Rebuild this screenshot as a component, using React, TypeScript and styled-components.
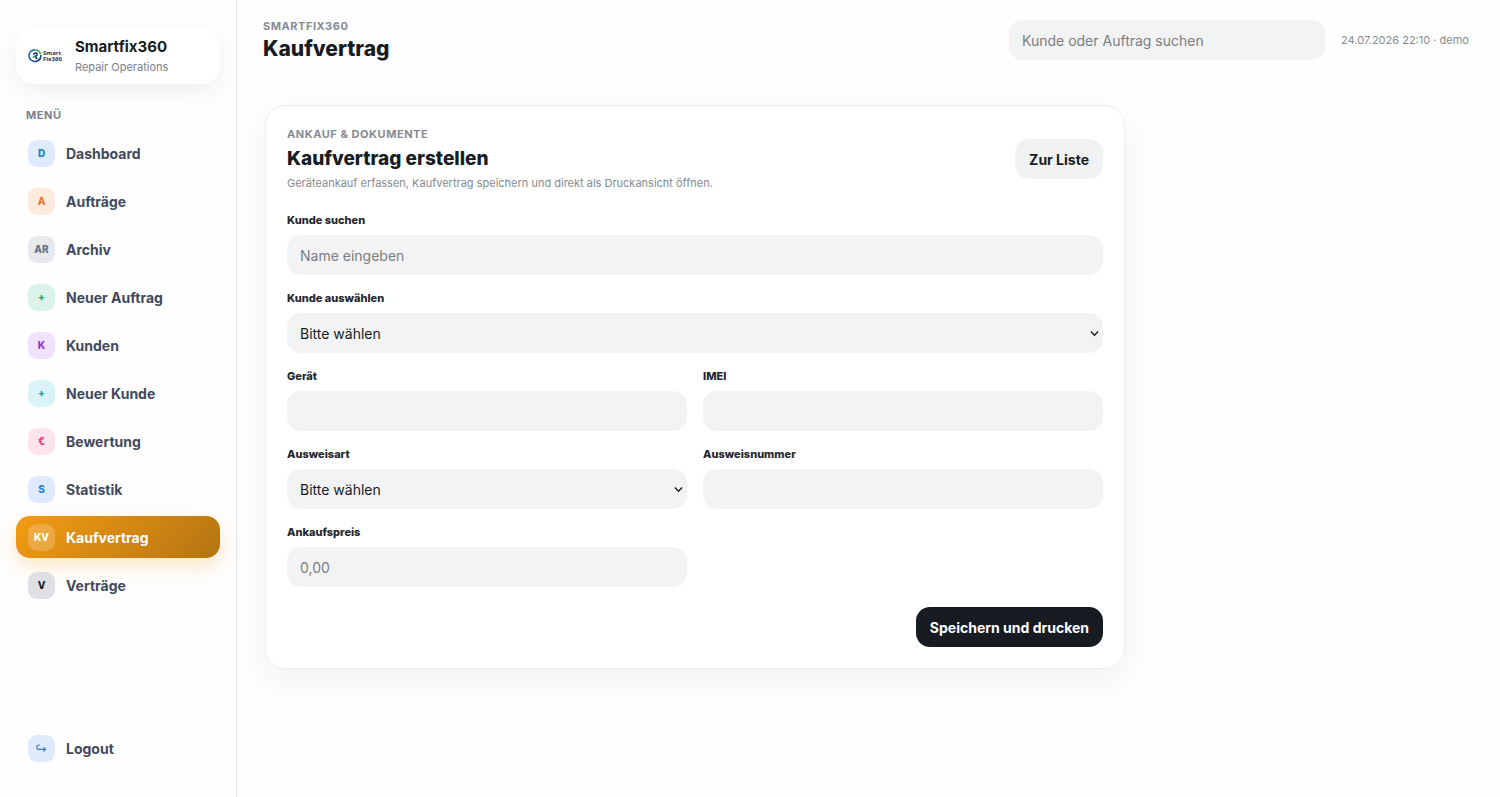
import React from "react";
import styled, { createGlobalStyle } from "styled-components";

const Global = createGlobalStyle`
  *, *::before, *::after { box-sizing: border-box; }
  body {
    margin: 0;
    background: #fefefe;
    color: #171c22;
    font-family: Inter, "Liberation Sans", sans-serif;
    font-size: 14px;
  }
  button, input, select { font: inherit; color: inherit; }
  h1, h2, p { margin: 0; }
`;

const Shell = styled.div`
  display: grid;
  grid-template-columns: 237px minmax(0, 1fr);
  min-height: 100vh;
`;

const Sidebar = styled.aside`
  display: flex;
  flex-direction: column;
  padding: 28px 16px;
  border-right: 1px solid #e4e5e8;
`;

const Brand = styled.div`
  display: flex;
  align-items: center;
  gap: 12px;
  height: 56px;
  padding: 0 12px;
  border-radius: 18px;
  background: #fff;
  box-shadow: 0 8px 24px rgba(20, 25, 35, 0.06);
`;

const BrandName = styled.div`
  font-size: 15px;
  line-height: 22px;
  font-weight: 700;
`;

const BrandSub = styled.div`
  font-size: 11px;
  line-height: 18px;
  color: #7b818c;
`;

const MenuTitle = styled.div`
  margin: 24px 0 9px 10px;
  font-size: 11px;
  line-height: 15px;
  font-weight: 700;
  letter-spacing: 0.05em;
  color: #7b818c;
`;

const Nav = styled.nav`
  display: flex;
  flex-direction: column;
  gap: 6px;
`;

const NavLink = styled.a<{ $active?: boolean }>`
  display: flex;
  align-items: center;
  gap: 11px;
  height: 42px;
  padding: 0 12px;
  border-radius: 14px;
  font-weight: 700;
  text-decoration: none;
  color: ${(p) => (p.$active ? "#fff" : "#414a5c")};
  background: ${(p) => (p.$active ? "linear-gradient(135deg, #f39c12, #b47412)" : "transparent")};
  box-shadow: ${(p) => (p.$active ? "0 8px 20px rgba(243, 156, 18, 0.24)" : "none")};
`;

const Badge = styled.span<{ $bg: string; $fg: string }>`
  display: grid;
  place-items: center;
  width: 27px;
  height: 27px;
  border-radius: 9px;
  font-size: 10px;
  font-weight: 800;
  background: ${(p) => p.$bg};
  color: ${(p) => p.$fg};
`;

const SidebarFooter = styled.div`
  margin-top: auto;
`;

const Topbar = styled.header`
  display: flex;
  align-items: center;
  justify-content: space-between;
  height: 80px;
  padding: 0 26px;
`;

const TitleBlock = styled.div`
  padding-top: 4px;
`;

const Eyebrow = styled.div`
  font-size: 11px;
  line-height: 14px;
  font-weight: 700;
  letter-spacing: 0.05em;
  text-transform: uppercase;
  color: #868b91;
`;

const PageTitle = styled.h1`
  font-size: 21px;
  line-height: 32px;
  font-weight: 800;
`;

const TopActions = styled.div`
  display: flex;
  align-items: center;
  gap: 16px;
`;

const Stamp = styled.span`
  min-width: 133px;
  font-size: 11px;
  line-height: 16px;
  color: #868b91;
`;

const Input = styled.input`
  display: block;
  width: 100%;
  height: 40px;
  padding: 0 13px;
  border: 0;
  border-radius: 14px;
  background: #f2f3f5;
  &::placeholder { color: #7b7d80; opacity: 1; }
`;

const SearchInput = styled(Input)`
  width: 316px;
`;

const Content = styled.main`
  padding: 25px 28px;
`;

const Card = styled.section`
  max-width: 860px;
  padding: 21px;
  border: 1px solid #eceeef;
  border-radius: 21px;
  background: #fff;
  box-shadow: 0 12px 32px rgba(20, 35, 30, 0.06);
`;

const CardHead = styled.div`
  display: flex;
  align-items: center;
  justify-content: space-between;
  margin-bottom: 22px;
`;

const CardTitle = styled.h2`
  margin: 3px 0 2px;
  font-size: 19px;
  line-height: 30px;
  font-weight: 800;
`;

const CardText = styled.p`
  font-size: 11px;
  line-height: 15px;
  color: #868b91;
`;

const Button = styled.button<{ $dark?: boolean }>`
  height: 40px;
  padding: 0 14px;
  border: 0;
  border-radius: 14px;
  font-weight: 700;
  background: ${(p) => (p.$dark ? "#171c22" : "#f1f2f4")};
  color: ${(p) => (p.$dark ? "#fff" : "#171c22")};
`;

const FormGrid = styled.form`
  display: grid;
  grid-template-columns: 1fr 1fr;
  gap: 16px;
`;

const Field = styled.div<{ $wide?: boolean }>`
  grid-column: ${(p) => (p.$wide ? "1 / -1" : "auto")};
`;

const Label = styled.label`
  display: block;
  margin-bottom: 7px;
  font-size: 11px;
  line-height: 15px;
  font-weight: 800;
  color: #23282f;
`;

const SelectWrap = styled.div`
  position: relative;
  svg {
    position: absolute;
    right: 4px;
    top: 16px;
    pointer-events: none;
  }
`;

const Select = styled.select`
  display: block;
  width: 100%;
  height: 40px;
  padding: 0 13px;
  border: 0;
  border-radius: 14px;
  appearance: none;
  background: #f2f3f5;
`;

const FormActions = styled.div`
  grid-column: 1 / -1;
  display: flex;
  justify-content: flex-end;
  padding-top: 4px;
`;

const Logo = () => (
  <svg width="35" height="16" viewBox="0 0 35 16" role="img" aria-label="Smart Fix360">
    <path d="M7 2A5.6 5.6 0 0 0 3.2 12" fill="none" stroke="#2368b5" strokeWidth="1.6" />
    <path d="M7 2A5.8 5.8 0 0 1 12.6 6.4" fill="none" stroke="#35b04a" strokeWidth="1.6" />
    <path d="M12.8 7A5.8 5.8 0 0 1 3.2 12" fill="none" stroke="#1b3f7d" strokeWidth="1.6" />
    <path d="M5.4 6.6Q6 5 7.8 5Q9.6 5.2 9 7L7.2 8.8L9.4 10.8" fill="none" stroke="#173c70" strokeWidth="1.6" />
    <path d="M4.8 9.8L7 7.4" stroke="#35a27a" strokeWidth="1.4" />
    <text fill="#1b3157" fontFamily="Open Sans" fontSize="6" fontWeight="700">
      <tspan x="15" y="7">Smart</tspan>
      <tspan x="15" y="13">Fix360</tspan>
    </text>
  </svg>
);

const LogoutIcon = () => (
  <svg width="11" height="9" viewBox="0 0 11 9" fill="none" stroke="currentColor" strokeWidth="1.2">
    <path d="M3.8 1H3A1.9 1.9 0 0 0 3 5.4H9.4M7.4 3.2L9.6 5.4L7.4 7.6" />
  </svg>
);

const Chevron = () => (
  <svg width="9" height="9" viewBox="0 0 9 9" fill="none" stroke="#171c22" strokeWidth="1.4" aria-hidden="true">
    <path d="M0.9 2.6L4.5 6.2L8.1 2.6" />
  </svg>
);

const items = [
  { label: "Dashboard", mark: "D", bg: "#dfebfc", fg: "#2380cf" },
  { label: "Aufträge", mark: "A", bg: "#fdeadf", fg: "#e67a2a" },
  { label: "Archiv", mark: "AR", bg: "#e7e9ed", fg: "#667080" },
  { label: "Neuer Auftrag", mark: "+", bg: "#dcf3eb", fg: "#16a06a" },
  { label: "Kunden", mark: "K", bg: "#f0e1fc", fg: "#9333d0" },
  { label: "Neuer Kunde", mark: "+", bg: "#daf3f8", fg: "#1599b0" },
  { label: "Bewertung", mark: "€", bg: "#fce4ed", fg: "#e0447f" },
  { label: "Statistik", mark: "S", bg: "#dfebfc", fg: "#2380cf" },
  { label: "Kaufvertrag", mark: "KV", bg: "rgba(255, 255, 255, 0.2)", fg: "#fff", active: true },
  { label: "Verträge", mark: "V", bg: "#dfe0e3", fg: "#171c22" },
];

export default function App() {
  return (
    <>
      <Global />
      <Shell>
        <Sidebar>
          <Brand>
            <Logo />
            <div>
              <BrandName>Smartfix360</BrandName>
              <BrandSub>Repair Operations</BrandSub>
            </div>
          </Brand>
          <MenuTitle>MENÜ</MenuTitle>
          <Nav>
            {items.map((it) => (
              <NavLink key={it.label} href="#" $active={it.active} aria-current={it.active ? "page" : undefined}>
                <Badge $bg={it.bg} $fg={it.fg}>{it.mark}</Badge>
                {it.label}
              </NavLink>
            ))}
          </Nav>
          <SidebarFooter>
            <NavLink href="#">
              <Badge $bg="#dfebfc" $fg="#3b7cc4"><LogoutIcon /></Badge>
              Logout
            </NavLink>
          </SidebarFooter>
        </Sidebar>
        <div>
          <Topbar>
            <TitleBlock>
              <Eyebrow>Smartfix360</Eyebrow>
              <PageTitle>Kaufvertrag</PageTitle>
            </TitleBlock>
            <TopActions>
              <SearchInput type="search" aria-label="Kunde oder Auftrag suchen" placeholder="Kunde oder Auftrag suchen" />
              <Stamp>24.07.2026 22:10 · demo</Stamp>
            </TopActions>
          </Topbar>
          <Content>
            <Card>
              <CardHead>
                <div>
                  <Eyebrow>Ankauf &amp; Dokumente</Eyebrow>
                  <CardTitle>Kaufvertrag erstellen</CardTitle>
                  <CardText>Geräteankauf erfassen, Kaufvertrag speichern und direkt als Druckansicht öffnen.</CardText>
                </div>
                <Button type="button">Zur Liste</Button>
              </CardHead>
              <FormGrid onSubmit={(e) => e.preventDefault()}>
                <Field $wide>
                  <Label htmlFor="search">Kunde suchen</Label>
                  <Input id="search" placeholder="Name eingeben" />
                </Field>
                <Field $wide>
                  <Label htmlFor="customer">Kunde auswählen</Label>
                  <SelectWrap>
                    <Select id="customer"><option>Bitte wählen</option></Select>
                    <Chevron />
                  </SelectWrap>
                </Field>
                <Field>
                  <Label htmlFor="device">Gerät</Label>
                  <Input id="device" />
                </Field>
                <Field>
                  <Label htmlFor="imei">IMEI</Label>
                  <Input id="imei" />
                </Field>
                <Field>
                  <Label htmlFor="idtype">Ausweisart</Label>
                  <SelectWrap>
                    <Select id="idtype"><option>Bitte wählen</option></Select>
                    <Chevron />
                  </SelectWrap>
                </Field>
                <Field>
                  <Label htmlFor="idnumber">Ausweisnummer</Label>
                  <Input id="idnumber" />
                </Field>
                <Field>
                  <Label htmlFor="price">Ankaufspreis</Label>
                  <Input id="price" inputMode="decimal" placeholder="0,00" />
                </Field>
                <FormActions>
                  <Button type="submit" $dark>Speichern und drucken</Button>
                </FormActions>
              </FormGrid>
            </Card>
          </Content>
        </div>
      </Shell>
    </>
  );
}
